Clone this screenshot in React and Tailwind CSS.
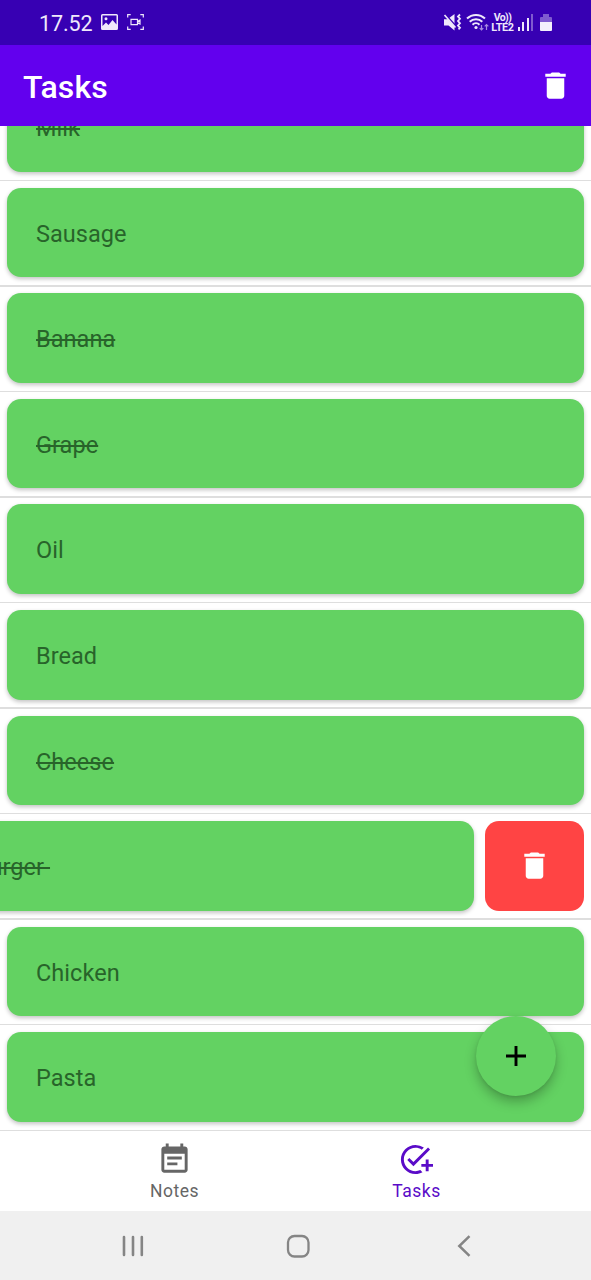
const tasks = [
  { name: "Milk", done: true },
  { name: "Sausage" },
  { name: "Banana", done: true },
  { name: "Grape", done: true },
  { name: "Oil" },
  { name: "Bread" },
  { name: "Cheese", done: true },
  { name: "Hamburger ", done: true, swiped: true },
  { name: "Chicken" },
  { name: "Pasta" },
];

function TrashIcon({ className }) {
  return (
    <svg viewBox="0 0 24 24" className={className} fill="currentColor">
      <path d="M6 19c0 1.1.9 2 2 2h8c1.1 0 2-.9 2-2V7H6v12zM19 4h-3.5l-1-1h-5l-1 1H5v2h14V4z" />
    </svg>
  );
}

function StatusBar() {
  return (
    <div className="flex h-[45px] shrink-0 items-center bg-[#3700b3] pl-[39px] pr-[39px] text-[#efe8fb]">
      <span className="mt-[2px] w-[62px] text-[21.5px] leading-none tracking-[-0.1px]">17.52</span>
      <svg viewBox="0 0 17 16" className="-mt-px h-4 w-[17px]" fill="currentColor">
        <path fillRule="evenodd" d="M1.5 0h14A1.5 1.5 0 0 1 17 1.5v13a1.5 1.5 0 0 1-1.5 1.5h-14A1.5 1.5 0 0 1 0 14.5v-13A1.5 1.5 0 0 1 1.5 0zM1.5 1.5v10.500l3.500-3.500 2.500 2.500 4-5 4 4.500V1.500zM5 3.200a1.500 1.500 0 1 1 0 3 1.500 1.500 0 0 1 0-3z" />
      </svg>
      <svg viewBox="0 0 17 16" className="-mt-px ml-[9px] h-4 w-[17px]" fill="none" stroke="currentColor" strokeWidth="1.2">
        <path d="M.7 3.500V.7h3M13.300.7h3v2.800M.7 12.500v2.800h3M13.300 15.300h3v-2.800M4 5.400h6.500v5.200H4zM10.500 7.500l2.500-1.500v4l-2.500-1.500" />
      </svg>
      <div className="flex-1" />
      <svg viewBox="0 0 19 18" className="-ml-px mt-[-1px] h-[18px] w-[19px]">
        <path d="M1 6.200h3.500L11.500 1v16.500L5.500 12.500H1z" fill="currentColor" />
        <path d="M.8 0L13 13.500" stroke="#3700b3" strokeWidth="2" />
        <path d="M1.500 2L12.500 14.500" stroke="currentColor" strokeWidth="1.600" />
        <path d="M17 1.500l-2 2 2 2.300-2 2.200 2 2.300-2 2.200 2 2.300-1.500 1.500" fill="none" stroke="currentColor" strokeWidth="1.800" />
      </svg>
      <svg viewBox="0 0 24 18" className="ml-[4px] mt-[-2px] h-[18px] w-6" fill="none" stroke="currentColor" strokeWidth="2">
        <path d="M1 5.500a13 13 0 0 1 18 0M3.700 8.800a9 9 0 0 1 12.600 0M6.500 11.700a5 5 0 0 1 7 0" />
        <circle cx="10" cy="14.500" r="1.600" fill="currentColor" stroke="none" />
        <path d="M15.500 12v5M13.700 15.200l1.800 1.800 1.800-1.800M20.500 17V11.500M18.700 13.300L20.500 11.500l1.800 1.800" stroke="#a98ae0" strokeWidth="1.200" />
      </svg>
      <div className="ml-px flex w-[23px] flex-col items-center text-[10.500px] font-bold leading-[11px]">
        <span className="-mb-px tracking-[-0.6px]">Vo))</span>
        <span className="text-[10.800px] tracking-[-0.3px]">LTE2</span>
      </div>
      <div className="ml-[4px] flex h-[17px] w-[15px] items-end justify-between">
        <div className="h-[4px] w-[2px] bg-[#efe8fb]" />
        <div className="h-[9px] w-[2px] bg-[#efe8fb]" />
        <div className="h-[13px] w-[2px] bg-[#efe8fb]" />
        <div className="h-[17px] w-[2px] bg-[#7f5bcf]" />
      </div>
      <div className="ml-[7px] flex w-3 flex-col items-center">
        <div className="h-[3px] w-[6px] bg-[#7f5bcf]" />
        <div className="h-[5px] w-3 rounded-t-[1px] bg-[#7f5bcf]" />
        <div className="h-[9px] w-3 rounded-b-[1px] bg-[#f4f0fc]" />
      </div>
    </div>
  );
}

function TaskRow({ task }) {
  return (
    <div className="flex h-[105.550px] shrink-0 flex-col">
      <div className="mt-[6.700px] flex h-[89.600px] px-[7px]">
        <div
          className={
            "flex h-full w-[577px] shrink-0 items-center rounded-[14px] bg-[#63d262] pl-[29px] shadow-[0_2px_4px_rgba(0,0,0,0.24)] " +
            (task.swiped ? "-ml-[110px]" : "")
          }
        >
          <span
            className={
              "mt-[4px] whitespace-pre text-[23.500px] leading-none tracking-[0.050px] text-[#28642a] " +
              (task.done ? "line-through decoration-[1.500px]" : "")
            }
          >
            {task.name}
          </span>
        </div>
        {task.swiped && (
          <button className="ml-[11px] flex h-full w-[99px] shrink-0 items-center justify-center rounded-[14px] bg-[#ff4444] text-white">
            <TrashIcon className="h-[35px] w-[35px]" />
          </button>
        )}
      </div>
      <div className="mt-auto h-[1.500px] bg-[#dedede]" />
    </div>
  );
}

export default function App() {
  return (
    <div className="relative flex h-[1280px] w-[591px] flex-col overflow-hidden bg-white font-['Roboto',sans-serif]">
      <StatusBar />
      <header className="flex h-[81px] shrink-0 items-center justify-between bg-[#6200ee] pl-[23px] pr-[18px] text-white">
        <h1 className="mt-[3px] text-[32px] font-medium leading-none tracking-[0.1px]">Tasks</h1>
        <TrashIcon className="h-[35px] w-[35px]" />
      </header>
      <main className="flex h-[1005px] shrink-0 flex-col justify-end overflow-hidden">
        {tasks.map((task) => (
          <TaskRow key={task.name} task={task} />
        ))}
      </main>
      <nav className="flex h-[80px] shrink-0 justify-center bg-white">
        <div className="flex w-[242px] flex-col items-center pt-[11px] text-[#666666]">
          <svg viewBox="0 0 24 24" className="mr-px h-[35px] w-[35px]" fill="currentColor">
            <path d="M17 10H7v2h10v-2zm2-7h-1V1h-2v2H8V1H6v2H5c-1.110 0-1.990.9-1.990 2L3 19c0 1.100.890 2 2 2h14c1.100 0 2-.9 2-2V5c0-1.100-.9-2-2-2zm0 16H5V8h14v11zm-5-5H7v2h7v-2z" />
          </svg>
          <span className="mt-[6px] text-[17.500px] leading-none tracking-[0.5px]">Notes</span>
        </div>
        <div className="flex w-[242px] flex-col items-center pt-[11px] text-[#5a0bc8]">
          <svg viewBox="0 0 24 24" className="mr-[2px] h-[35px] w-[35px]" fill="currentColor">
            <path d="M22 5.180L10.590 16.600l-4.240-4.240 1.410-1.410 2.830 2.830 10-10L22 5.180zM12 20c-4.410 0-8-3.590-8-8s3.590-8 8-8c1.570 0 3.040.460 4.280 1.250l1.450-1.450A10.020 10.020 0 0 0 12 2C6.480 2 2 6.480 2 12s4.480 10 10 10c1.730 0 3.360-.44 4.780-1.220l-1.500-1.500c-1 .46-2.110.72-3.280.72zm7-5h-3v2h3v3h2v-3h3v-2h-3v-3h-2v3z" />
          </svg>
          <span className="mt-[6px] text-[17.500px] leading-none tracking-[0.5px]">Tasks</span>
        </div>
      </nav>
      <div className="flex h-[69px] shrink-0 items-center justify-between bg-[#f0f0f0] pl-[122px] pr-[120px] text-[#858585]">
        <svg viewBox="0 0 22 22" className="h-[22px] w-[22px]" stroke="currentColor" strokeWidth="2.600" strokeLinecap="round">
          <path d="M2 2v18M11 2v18M19.800 2v18" />
        </svg>
        <svg viewBox="0 0 24 24" className="mr-[6px] h-6 w-6" fill="none" stroke="currentColor" strokeWidth="2.300">
          <rect x="2" y="2" width="20.500" height="20.500" rx="6.500" />
        </svg>
        <svg viewBox="0 0 14 22" className="h-[22px] w-[14px]" fill="none" stroke="currentColor" strokeWidth="2.500">
          <path d="M12.500 1.200L2.300 11l10.200 9.800" />
        </svg>
      </div>
      <button className="absolute left-[476px] top-[1016px] flex h-20 w-20 items-center justify-center rounded-full bg-[#63d262] shadow-[0_6px_12px_rgba(0,0,0,0.26),0_1px_3px_rgba(0,0,0,0.08)]">
        <svg viewBox="0 0 20 20" className="h-5 w-5" stroke="#000" strokeWidth="2.900">
          <path d="M10 0v20M0 10h20" />
        </svg>
      </button>
    </div>
  );
}
